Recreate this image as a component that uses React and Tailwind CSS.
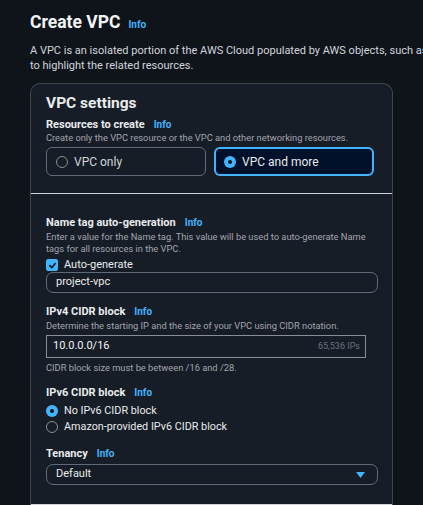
import React from 'react';

const Info = () => (
  <span className="text-[10px] font-bold text-[#42b4ff]">Info</span>
);

const Radio = ({ checked }) =>
  checked ? (
    <span className="flex h-[12px] w-[12px] shrink-0 items-center justify-center rounded-full bg-[#42b4ff]">
      <span className="h-[4px] w-[4px] rounded-full bg-[#0f141a]" />
    </span>
  ) : (
    <span className="h-[12px] w-[12px] shrink-0 rounded-full border border-[#8c8c94]" />
  );

const Label = ({ children }) => (
  <div className="flex items-baseline gap-[9px] leading-[14px]">
    <span className="text-[11px] font-bold text-[#e9ebed]">{children}</span>
    <Info />
  </div>
);

const Desc = ({ children, className = '' }) => (
  <p className={`text-[9.3px] leading-[12px] text-[#a4a4ad] ${className}`}>{children}</p>
);

export default function App() {
  return (
    <div
      className="h-[505px] w-[423px] overflow-hidden bg-[#0f141a] pl-[30px] pt-[10px] text-[#d1d5db]"
      style={{ fontFamily: 'Roboto, "Open Sans", sans-serif' }}
    >
      {/* Header */}
      <div className="flex items-baseline gap-[8px]">
        <h1 className="text-[17.5px] font-bold leading-[24px] text-[#f3f4f6]">Create VPC</h1>
        <Info />
      </div>
      <p className="mt-[9px] whitespace-nowrap text-[11px] leading-[15px] text-[#d1d5db]">
        A VPC is an isolated portion of the AWS Cloud populated by AWS objects, such as Amazon EC2 instances.
        <br />
        to highlight the related resources.
      </p>

      {/* Card */}
      <div className="mt-[10px] w-[363px] rounded-t-[10px] border border-b-0 border-[#424650] bg-[#161d26]">
        <div className="px-[15px] pt-[9px] pb-[17px]">
          <h2 className="text-[15.5px] font-bold leading-[20px] text-[#e9ebed]">VPC settings</h2>
          <div className="mt-[5px]">
            <Label>Resources to create</Label>
            <Desc>Create only the VPC resource or the VPC and other networking resources.</Desc>
          </div>
          <div className="mt-[3px] grid w-[328px] grid-cols-2 gap-[8px]">
            <div className="flex h-[29px] items-center gap-[6px] rounded-[6px] border border-[#5f6b7a] px-[9px]">
              <Radio />
              <span className="text-[12px] text-[#d1d5db]">VPC only</span>
            </div>
            <div className="flex h-[29px] items-center gap-[6px] rounded-[6px] border-2 border-[#42b4ff] bg-[#001129] px-[8px]">
              <Radio checked />
              <span className="text-[12px] text-[#e9ebed]">VPC and more</span>
            </div>
          </div>
        </div>

        <div className="border-t border-[#d1d5db] px-[15px] pt-[22px] pb-[19px]">
          {/* Name tag */}
          <Label>Name tag auto-generation</Label>
          <Desc className="mt-[1px] w-[330px]">
            Enter a value for the Name tag. This value will be used to auto-generate Name tags for all resources in the VPC.
          </Desc>
          <div className="mt-[3px] flex items-center gap-[6px]">
            <span className="flex h-[12px] w-[12px] items-center justify-center rounded-[2px] bg-[#42b4ff]">
              <svg width="9" height="9" viewBox="0 0 10 10" fill="none">
                <path d="M2 5.2 L4.2 7.4 L8 2.8" stroke="#0f141a" strokeWidth="1.8" strokeLinecap="round" strokeLinejoin="round" />
              </svg>
            </span>
            <span className="text-[11px] leading-[14px] text-[#e9ebed]">Auto-generate</span>
          </div>
          <div className="flex h-[21px] w-[332px] items-center rounded-[7px] border border-[#5f6b7a] px-[9px] text-[11px] text-[#e9ebed]">
            project-vpc
          </div>

          {/* IPv4 */}
          <div className="mt-[12px]">
            <Label>IPv4 CIDR block</Label>
            <Desc className="mt-[1px]">Determine the starting IP and the size of your VPC using CIDR notation.</Desc>
          </div>
          <div className="mt-[3px] flex h-[23px] w-[320px] items-center justify-between border border-[#8c8c94] pl-[6px] pr-[5px]">
            <span className="text-[11px] text-[#f3f4f6]">10.0.0.0/16</span>
            <span className="text-[9px] text-[#6b7280]">65,536 IPs</span>
          </div>
          <Desc className="mt-[4px]">CIDR block size must be between /16 and /28.</Desc>

          {/* IPv6 */}
          <div className="mt-[12px]">
            <Label>IPv6 CIDR block</Label>
          </div>
          <div className="mt-[5px] flex flex-col gap-[4px]">
            <div className="flex items-center gap-[6px]">
              <Radio checked />
              <span className="text-[10.8px] leading-[12px] text-[#e9ebed]">No IPv6 CIDR block</span>
            </div>
            <div className="flex items-center gap-[6px]">
              <Radio />
              <span className="text-[10.8px] leading-[12px] text-[#e9ebed]">Amazon-provided IPv6 CIDR block</span>
            </div>
          </div>

          {/* Tenancy */}
          <div className="mt-[14px]">
            <Label>Tenancy</Label>
          </div>
          <div className="mt-[3px] flex h-[21px] w-[332px] items-center justify-between rounded-[7px] border border-[#5f6b7a] pl-[9px] pr-[12px]">
            <span className="text-[11px] text-[#e9ebed]">Default</span>
            <svg width="9" height="6" viewBox="0 0 9 6">
              <path d="M0 0 H9 L4.5 6 Z" fill="#42b4ff" />
            </svg>
          </div>
        </div>

        <div className="h-[20px] border-t border-[#d1d5db]" />
      </div>
    </div>
  );
}
